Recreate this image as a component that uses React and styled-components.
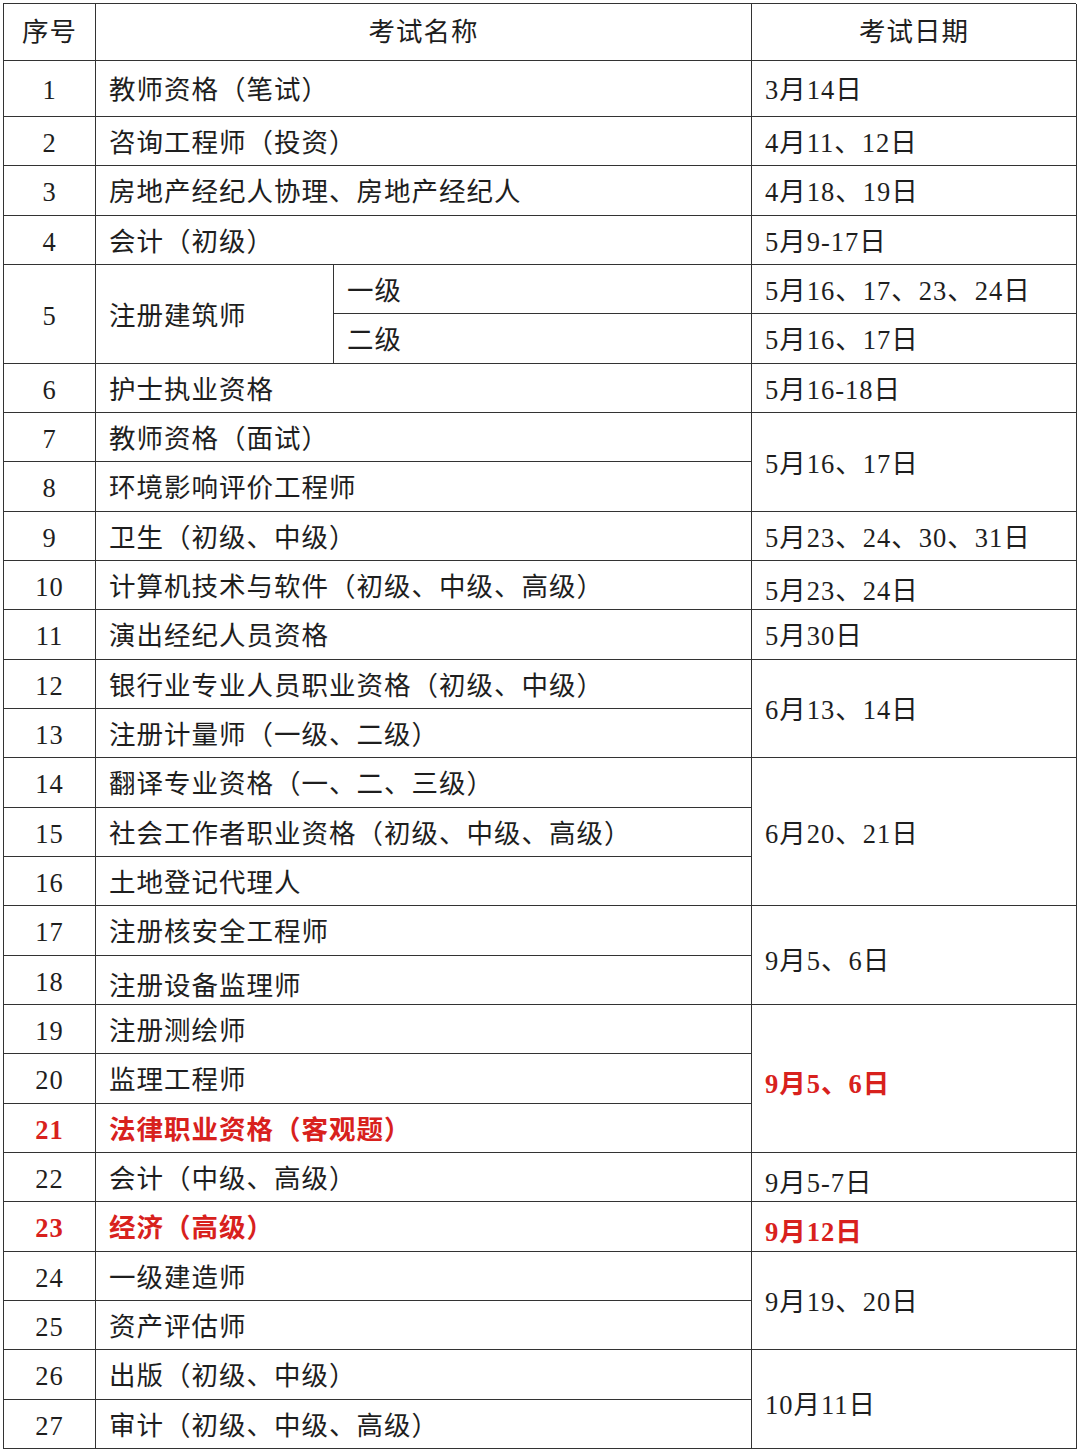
import React from "react";
import styled, { createGlobalStyle } from "styled-components";

const GlobalStyle = createGlobalStyle`
  html, body {
    margin: 0;
    padding: 0;
    background: #ffffff;
  }
  body {
    font-family: "Liberation Serif", "Noto Sans CJK SC", serif;
    color: #1e1e1e;
  }
`;

const Page = styled.div`
  width: 1080px;
  height: 1452px;
  padding: 3px 0 0 3px;
  box-sizing: border-box;
  background: #fff;
`;

const Table = styled.div`
  display: grid;
  grid-template-columns: 92px 238px 418px 325px;
  grid-template-rows: 57px 56px repeat(27, 1fr);
  height: 1446px;
  width: 1073px;
  box-sizing: border-box;
  border-top: 1.5px solid #333;
  border-left: 1.5px solid #333;
`;

const Cell = styled.div`
  grid-row: ${(p) => p.$row} / span ${(p) => p.$span || 1};
  grid-column: ${(p) => p.$col} / span ${(p) => p.$cols || 1};
  display: flex;
  align-items: center;
  justify-content: ${(p) => (p.$center ? "center" : "flex-start")};
  padding-left: ${(p) => (p.$center ? "0" : "13px")};
  padding-top: ${(p) => (p.$head ? 0 : p.$drop ? 12 : 4)}px;
  box-sizing: border-box;
  border-right: 1.5px solid #333;
  border-bottom: 1.5px solid #333;
  font-size: 26.5px;
  line-height: 1;
  white-space: nowrap;
  text-spacing-trim: space-all;
  color: ${(p) => (p.$red ? "#d8211d" : "#1e1e1e")};
  font-weight: ${(p) => (p.$red ? 700 : 400)};
  letter-spacing: 1px;
`;

const rows = [
  { n: 1, name: "教师资格（笔试）", date: "3月14日" },
  { n: 2, name: "咨询工程师（投资）", date: "4月11、12日" },
  { n: 3, name: "房地产经纪人协理、房地产经纪人", date: "4月18、19日" },
  { n: 4, name: "会计（初级）", date: "5月9-17日" },
  { n: 5, name: "注册建筑师", sub: [["一级", "5月16、17、23、24日"], ["二级", "5月16、17日"]] },
  { n: 6, name: "护士执业资格", date: "5月16-18日" },
  { n: 7, name: "教师资格（面试）", date: "5月16、17日", span: 2 },
  { n: 8, name: "环境影响评价工程师" },
  { n: 9, name: "卫生（初级、中级）", date: "5月23、24、30、31日" },
  { n: 10, name: "计算机技术与软件（初级、中级、高级）", date: "5月23、24日", dateDrop: true },
  { n: 11, name: "演出经纪人员资格", date: "5月30日" },
  { n: 12, name: "银行业专业人员职业资格（初级、中级）", date: "6月13、14日", span: 2 },
  { n: 13, name: "注册计量师（一级、二级）" },
  { n: 14, name: "翻译专业资格（一、二、三级）", date: "6月20、21日", span: 3 },
  { n: 15, name: "社会工作者职业资格（初级、中级、高级）" },
  { n: 16, name: "土地登记代理人" },
  { n: 17, name: "注册核安全工程师", date: "9月5、6日", span: 2, dateDrop: true },
  { n: 18, name: "注册设备监理师", drop: true },
  { n: 19, name: "注册测绘师", date: "9月5、6日", span: 3, dateRed: true, dateDrop: true },
  { n: 20, name: "监理工程师" },
  { n: 21, name: "法律职业资格（客观题）", red: true },
  { n: 22, name: "会计（中级、高级）", date: "9月5-7日", dateDrop: true },
  { n: 23, name: "经济（高级）", date: "9月12日", red: true, dateRed: true, dateDrop: true },
  { n: 24, name: "一级建造师", date: "9月19、20日", span: 2 },
  { n: 25, name: "资产评估师" },
  { n: 26, name: "出版（初级、中级）", date: "10月11日", span: 2, dateDrop: true },
  { n: 27, name: "审计（初级、中级、高级）" },
];

// grid track for a given exam number (row 5 takes two tracks)
const trackOf = (n) => (n <= 5 ? n + 1 : n + 2);

const App = () => (
  <Page>
    <GlobalStyle />
    <Table>
      <Cell $row={1} $col={1} $center $head>序号</Cell>
      <Cell $row={1} $col={2} $cols={2} $center $head>考试名称</Cell>
      <Cell $row={1} $col={4} $center $head>考试日期</Cell>

      {rows.map((r) => {
        const t = trackOf(r.n);
        if (r.sub) {
          return (
            <React.Fragment key={r.n}>
              <Cell $row={t} $span={2} $col={1} $center>{r.n}</Cell>
              <Cell $row={t} $span={2} $col={2}>{r.name}</Cell>
              {r.sub.map(([lvl, d], i) => (
                <React.Fragment key={lvl}>
                  <Cell $row={t + i} $col={3}>{lvl}</Cell>
                  <Cell $row={t + i} $col={4}>{d}</Cell>
                </React.Fragment>
              ))}
            </React.Fragment>
          );
        }
        return (
          <React.Fragment key={r.n}>
            <Cell $row={t} $col={1} $center $red={r.red}>{r.n}</Cell>
            <Cell $row={t} $col={2} $cols={2} $red={r.red} $drop={r.drop}>
              {r.name}
            </Cell>
            {r.date && (
              <Cell $row={t} $span={r.span} $col={4} $red={r.dateRed} $drop={r.dateDrop}>
                {r.date}
              </Cell>
            )}
          </React.Fragment>
        );
      })}
    </Table>
  </Page>
);

export default App;
